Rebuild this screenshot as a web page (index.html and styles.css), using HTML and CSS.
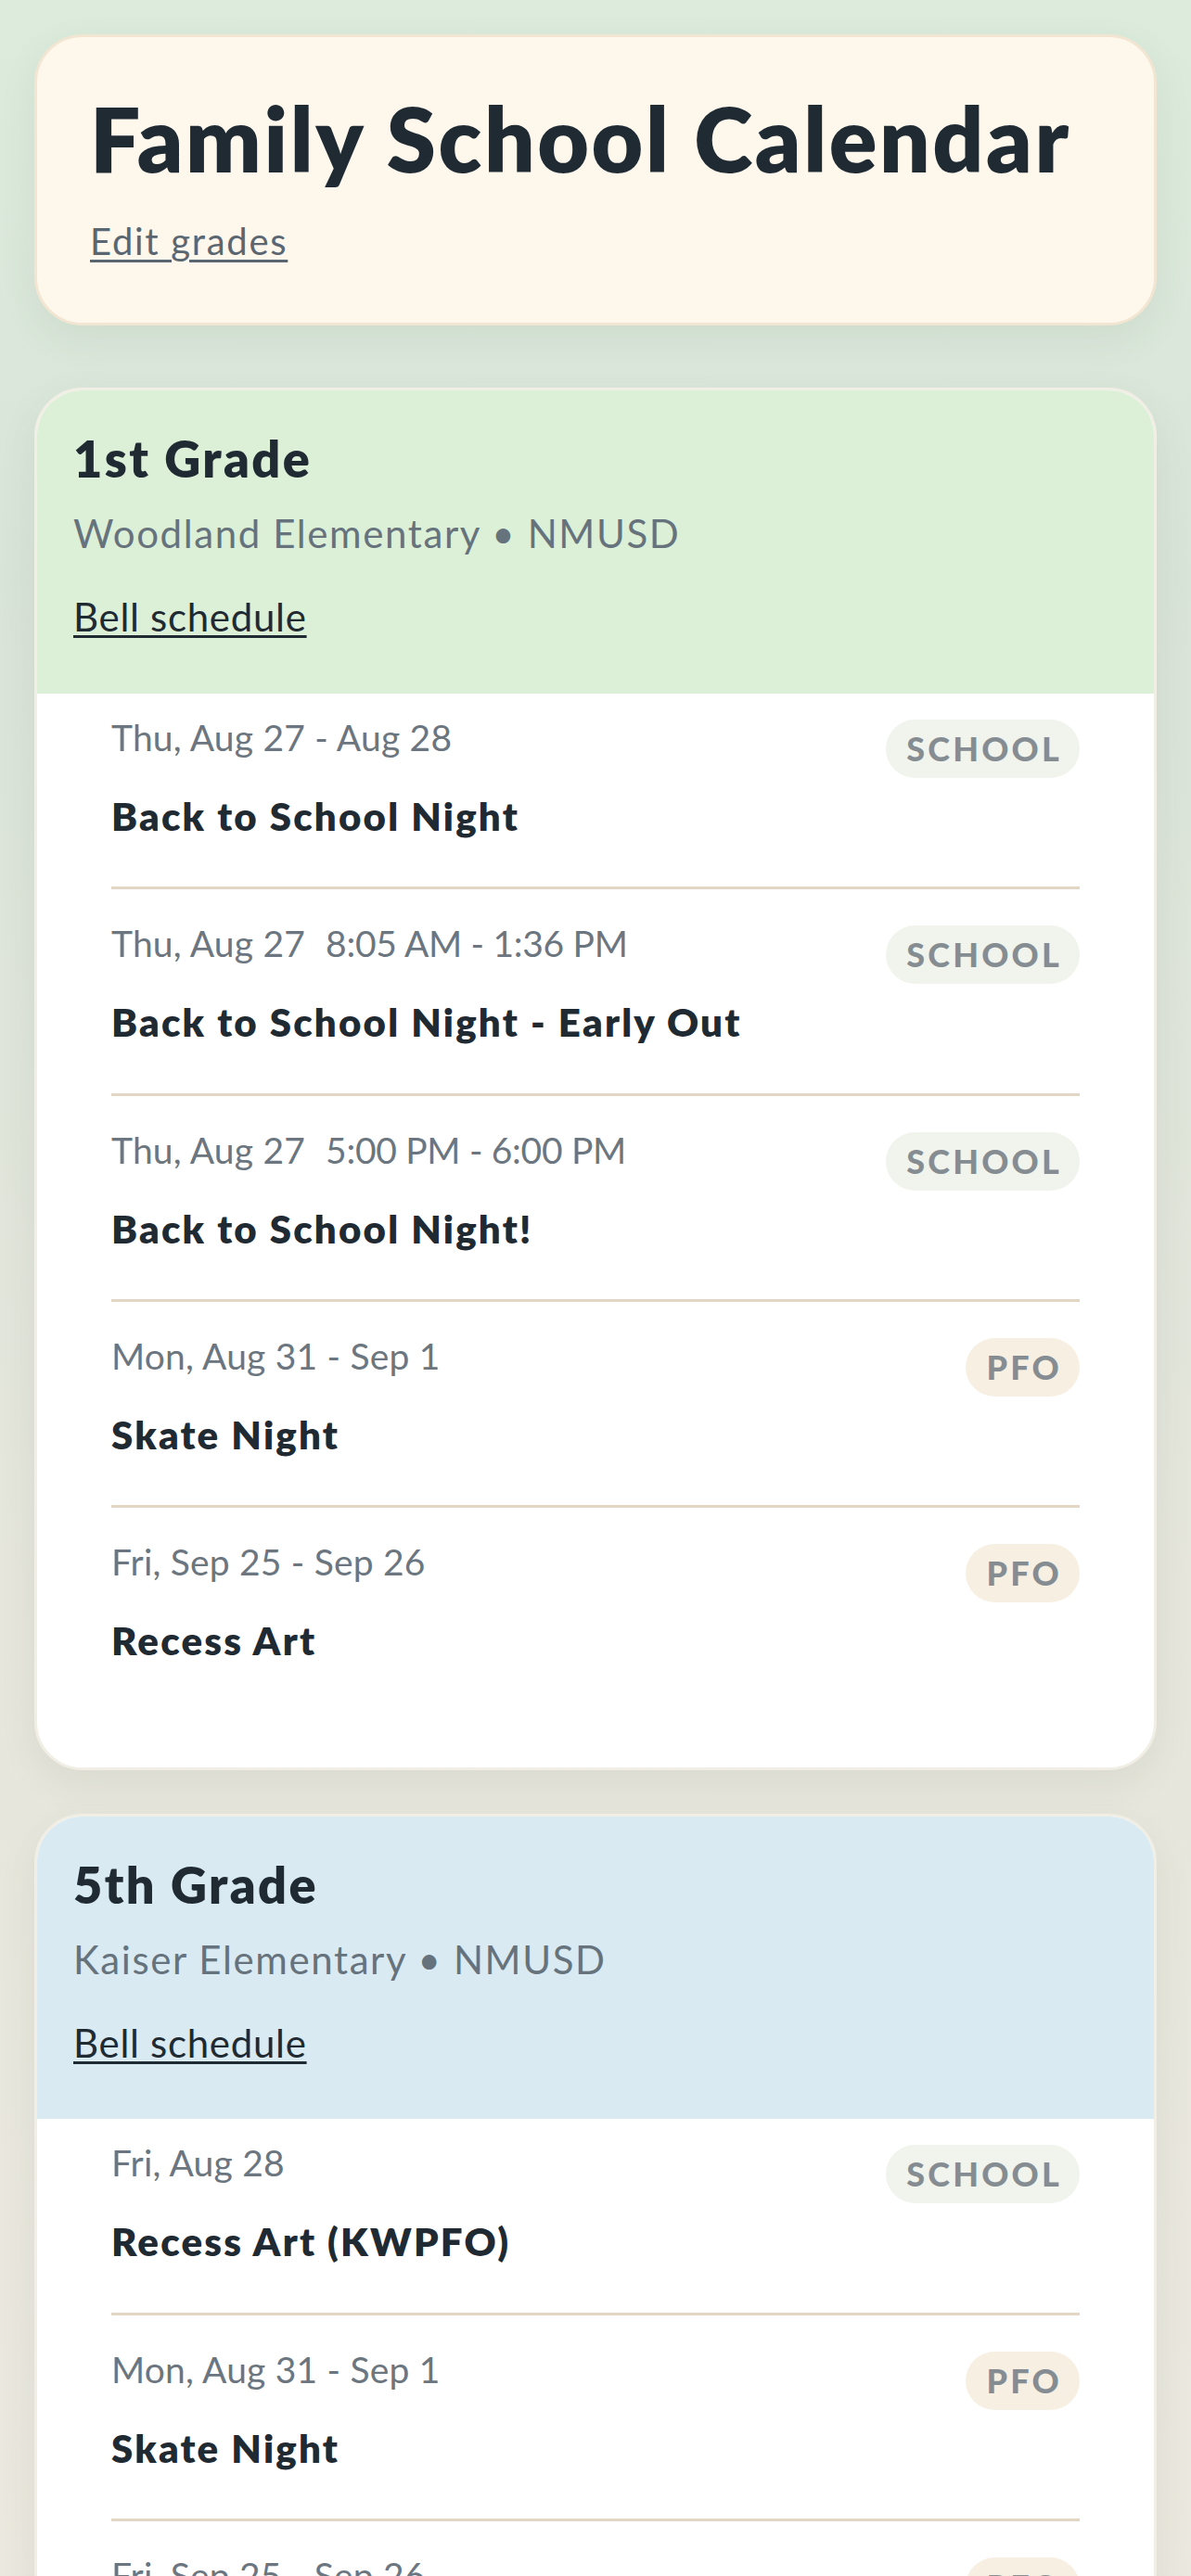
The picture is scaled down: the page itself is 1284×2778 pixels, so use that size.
FILE: index.html
```html
<!DOCTYPE html>
<html lang="en">
<head>
    <meta charset="UTF-8">
    <meta name="viewport" content="width=device-width, initial-scale=1.0">
    <title>Family School Calendar</title>
    <link rel="stylesheet" href="styles.css">
</head>
<body>
    <main class="page">
        <header class="intro-card">
            <h1>Family School Calendar</h1>
            <a href="#" class="edit-link">Edit grades</a>
        </header>

        <section class="grade-card">
            <div class="grade-head grade-head-green">
                <h2>1st Grade</h2>
                <p class="school">Woodland Elementary • NMUSD</p>
                <a href="#" class="bell-link">Bell schedule</a>
            </div>
            <ul class="events">
                <li class="event">
                    <div class="event-top">
                        <span class="event-when">Thu, Aug 27 - Aug 28</span>
                        <span class="tag tag-school">SCHOOL</span>
                    </div>
                    <div class="event-title">Back to School Night</div>
                </li>
                <li class="event">
                    <div class="event-top">
                        <span class="event-when">Thu, Aug 27<span class="event-time">8:05 AM - 1:36 PM</span></span>
                        <span class="tag tag-school">SCHOOL</span>
                    </div>
                    <div class="event-title">Back to School Night - Early Out</div>
                </li>
                <li class="event">
                    <div class="event-top">
                        <span class="event-when">Thu, Aug 27<span class="event-time">5:00 PM - 6:00 PM</span></span>
                        <span class="tag tag-school">SCHOOL</span>
                    </div>
                    <div class="event-title">Back to School Night!</div>
                </li>
                <li class="event">
                    <div class="event-top">
                        <span class="event-when">Mon, Aug 31 - Sep 1</span>
                        <span class="tag tag-pfo">PFO</span>
                    </div>
                    <div class="event-title">Skate Night</div>
                </li>
                <li class="event">
                    <div class="event-top">
                        <span class="event-when">Fri, Sep 25 - Sep 26</span>
                        <span class="tag tag-pfo">PFO</span>
                    </div>
                    <div class="event-title">Recess Art</div>
                </li>
            </ul>
        </section>

        <section class="grade-card">
            <div class="grade-head grade-head-blue">
                <h2>5th Grade</h2>
                <p class="school">Kaiser Elementary • NMUSD</p>
                <a href="#" class="bell-link">Bell schedule</a>
            </div>
            <ul class="events">
                <li class="event">
                    <div class="event-top">
                        <span class="event-when">Fri, Aug 28</span>
                        <span class="tag tag-school">SCHOOL</span>
                    </div>
                    <div class="event-title">Recess Art (KWPFO)</div>
                </li>
                <li class="event">
                    <div class="event-top">
                        <span class="event-when">Mon, Aug 31 - Sep 1</span>
                        <span class="tag tag-pfo">PFO</span>
                    </div>
                    <div class="event-title">Skate Night</div>
                </li>
                <li class="event">
                    <div class="event-top">
                        <span class="event-when">Fri, Sep 25 - Sep 26</span>
                        <span class="tag tag-pfo">PFO</span>
                    </div>
                    <div class="event-title">Recess Art</div>
                </li>
            </ul>
        </section>
    </main>
</body>
</html>
```

FILE: styles.css
```css
html {
    background: linear-gradient(180deg, #dcebdc 0%, #d9e4d8 20%, #e6e6dc 55%, #ede9e0 100%);
    min-height: 100%;
}
body {
    font-family: "Lato", "Liberation Sans", sans-serif;
    margin: 0;
    padding: 37px 37px 80px;
    color: #1f2a33;
}
.page {
    display: flex;
    flex-direction: column;
}
.intro-card {
    background-color: #fdf7ec;
    border: 3px solid #f2e6d3;
    border-radius: 52px;
    padding: 51px 57px 64px;
    box-shadow: 0 14px 40px rgba(70, 90, 70, 0.08);
    margin-bottom: 67px;
}
h1 {
    font-size: 96px;
    line-height: 1.2;
    font-weight: 800;
    letter-spacing: 2.6px;
    margin: 0 0 30px;
    color: #1f2a33;
}
.edit-link {
    font-size: 40px;
    line-height: 1.2;
    letter-spacing: 1.7px;
    color: #5a6672;
    text-decoration: underline;
    text-decoration-thickness: 3px;
    text-underline-offset: 5px;
}
.grade-card {
    background-color: #fff;
    border: 3px solid #f1eee5;
    border-radius: 52px;
    overflow: hidden;
    box-shadow: 0 14px 40px rgba(70, 80, 60, 0.08);
    margin-bottom: 47px;
}
.grade-head {
    padding: 42px 39px 57px;
    display: flex;
    flex-direction: column;
    align-items: flex-start;
}
.grade-head-green {
    background-color: #dcefd7;
}
.grade-head-blue {
    background-color: #d9eaf3;
}
h2 {
    font-size: 54px;
    line-height: 1.2;
    font-weight: 800;
    letter-spacing: 2.4px;
    margin: 0 0 22px;
}
.school {
    font-size: 42px;
    line-height: 1.2;
    letter-spacing: 1.6px;
    color: #66737d;
    margin: 0 0 40px;
}
.bell-link {
    font-size: 42px;
    line-height: 1.2;
    letter-spacing: 0.7px;
    color: #1f2a33;
    text-decoration: underline;
    text-decoration-thickness: 3px;
    text-underline-offset: 4px;
}
.events {
    list-style: none;
    margin: 0;
    padding: 0 80px 60px;
}
.event {
    padding: 35px 0 51px;
    border-bottom: 3px solid #e3d6c5;
}
.event:first-child {
    padding-top: 24px;
}
.event:last-child {
    border-bottom: none;
}
.event-top {
    display: flex;
    justify-content: space-between;
    align-items: flex-start;
    margin-bottom: 16px;
}
.event-when {
    font-size: 39px;
    line-height: 1.2;
    letter-spacing: 0.2px;
    color: #6b7680;
}
.event-time {
    margin-left: 22px;
    letter-spacing: -0.3px;
}
.tag {
    margin-top: 4px;
    font-size: 36px;
    line-height: 43px;
    font-weight: 900;
    letter-spacing: 3.2px;
    color: #858d93;
    padding: 10px 19px 10px 22px;
    border-radius: 32px;
}
.tag-school {
    background-color: #f1f4ec;
}
.tag-pfo {
    background-color: #f7efe2;
}
.event-title {
    font-size: 42px;
    line-height: 1.2;
    font-weight: 800;
    letter-spacing: 2.2px;
    color: #1f2a33;
}
```
